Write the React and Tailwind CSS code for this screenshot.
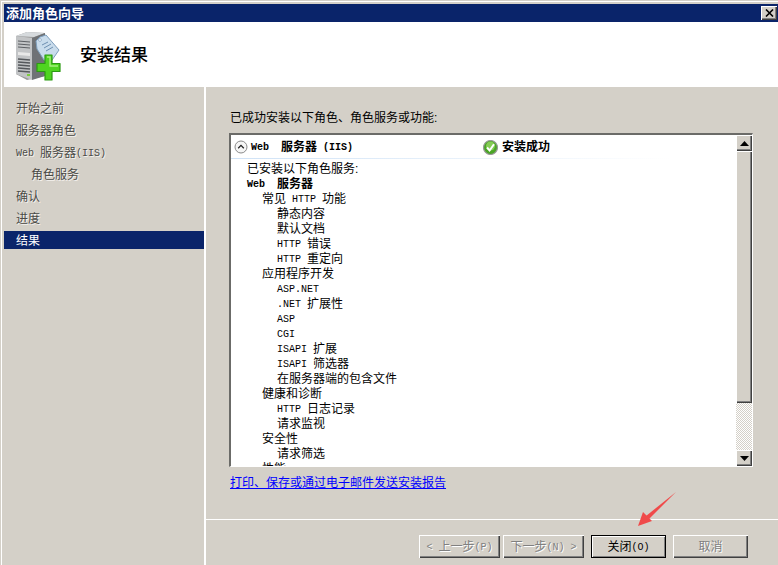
import React from 'react';

const Mono = ({ children }) => (
  <span className="font-['Liberation_Mono',monospace] text-[10px] whitespace-pre align-[1px]">{children}</span>
);

const steps = [
  { label: '开始之前' },
  { label: '服务器角色' },
  { label: <><Mono>Web </Mono>服务器<Mono>(IIS)</Mono></> },
  { label: '角色服务', sub: true },
  { label: '确认' },
  { label: '进度' },
  { label: '结果', active: true },
];

const treeRows = [
  { text: '已安装以下角色服务:', pad: 'pl-[16px]' },
  { text: <><Mono>Web  </Mono>服务器</>, pad: 'pl-[16px]', bold: true },
  { text: <>常见<Mono> HTTP </Mono>功能</>, pad: 'pl-[31px]' },
  { text: '静态内容', pad: 'pl-[46px]' },
  { text: '默认文档', pad: 'pl-[46px]' },
  { text: <><Mono>HTTP </Mono>错误</>, pad: 'pl-[46px]' },
  { text: <><Mono>HTTP </Mono>重定向</>, pad: 'pl-[46px]' },
  { text: '应用程序开发', pad: 'pl-[31px]' },
  { text: <Mono>ASP.NET</Mono>, pad: 'pl-[46px]' },
  { text: <><Mono>.NET </Mono>扩展性</>, pad: 'pl-[46px]' },
  { text: <Mono>ASP</Mono>, pad: 'pl-[46px]' },
  { text: <Mono>CGI</Mono>, pad: 'pl-[46px]' },
  { text: <><Mono>ISAPI </Mono>扩展</>, pad: 'pl-[46px]' },
  { text: <><Mono>ISAPI </Mono>筛选器</>, pad: 'pl-[46px]' },
  { text: '在服务器端的包含文件', pad: 'pl-[46px]' },
  { text: '健康和诊断', pad: 'pl-[31px]' },
  { text: <><Mono>HTTP </Mono>日志记录</>, pad: 'pl-[46px]' },
  { text: '请求监视', pad: 'pl-[46px]' },
  { text: '安全性', pad: 'pl-[31px]' },
  { text: '请求筛选', pad: 'pl-[46px]' },
  { text: '性能', pad: 'pl-[31px]' },
];

const bevel = 'shadow-[inset_1px_1px_0_#ffffff,inset_-1px_-1px_0_#404040,inset_-2px_-2px_0_#808080]';

const WizardButton = ({ children, width, disabled, primary }) => (
  <div
    className={`${width} h-[23px] flex items-center justify-center bg-[#d4d0c8] text-xs ${
      primary ? 'border border-black shadow-[inset_1px_1px_0_#ffffff,inset_-1px_-1px_0_#808080]' : bevel
    } ${disabled ? 'text-[#808080] [text-shadow:1px_1px_0_#ffffff]' : 'text-black'}`}
  >
    <span>{children}</span>
  </div>
);

const ServerIcon = () => (
  <svg width="48" height="52" viewBox="0 0 48 52">
    <path d="M1 6 L12 2 L30 3 L30 46 L12 50 L1 44 Z" fill="#9a9a9a" />
    <path d="M1 6 L12 2 L30 3 L19 7 Z" fill="#d6dadd" />
    <path d="M1 6 L17 8 L17 50 L1 44 Z" fill="#c2c4c6" />
    <path d="M17 8 L30 3 L30 46 L17 50 Z" fill="#6f7276" />
    <path d="M3 11 L15 12 M3 14 L15 15 M3 17 L15 18" stroke="#5c5f63" strokeWidth="1" />
    <path d="M3 22 L15 23 L15 26 L3 25 Z" fill="#e8e8e8" />
    <path d="M3 29 L15 30 M3 32 L15 33 M3 35 L15 36 M3 38 L15 39 M3 41 L15 42" stroke="#55585c" strokeWidth="1.4" />
    <rect x="12" y="44" width="3" height="2" fill="#7ccb3d" />
    <path d="M21 11 L25 7 L31 5 L44 20 L35 33 L29 30 L22 19 Z" fill="#c9dcec" stroke="#7f9fbd" strokeWidth="1" />
    <path d="M27 15 L33 12 M29 18 L36 14 M31 21 L38 17" stroke="#6d8fb0" strokeWidth="1" />
    <circle cx="25" cy="10" r="1.4" fill="#ffffff" stroke="#6d8fb0" strokeWidth="0.6" />
    <path
      d="M30 25 H37 V33.5 H45 V41.5 H37 V50 H30 V41.5 H22 V33.5 H30 Z"
      fill="#4fd421"
      stroke="#2b9a12"
      strokeWidth="1.2"
      strokeLinejoin="round"
    />
    <path d="M32 27 H35 V36 H43" fill="none" stroke="#a5f07e" strokeWidth="1.4" />
  </svg>
);

const ChevronCircle = () => (
  <svg width="14" height="14" viewBox="0 0 14 14">
    <circle cx="7" cy="7" r="6" fill="#f6f6f6" stroke="#8a8a8a" />
    <path d="M4.2 8.2 L7 5.4 L9.8 8.2" fill="none" stroke="#222222" strokeWidth="1.3" />
  </svg>
);

const CheckCircle = () => (
  <svg width="15" height="15" viewBox="0 0 15 15">
    <circle cx="7.5" cy="7.5" r="7" fill="#4aa526" stroke="#9a9a9a" strokeWidth="1.2" />
    <circle cx="7.5" cy="6" r="4.5" fill="#86cc55" />
    <path d="M4 7.5 L6.6 10.5 L11 4.2" fill="none" stroke="#ffffff" strokeWidth="2" />
  </svg>
);

const Arrow = ({ dir }) => (
  <svg width="9" height="5" viewBox="0 0 9 5">
    <path d={dir === 'up' ? 'M4.5 0 L9 5 L0 5 Z' : 'M0 0 L9 0 L4.5 5 Z'} fill="#000000" />
  </svg>
);

export default function App() {
  return (
    <div className="relative w-[778px] h-[565px] overflow-hidden flex flex-col bg-[#d4d0c8] text-xs text-black font-['Liberation_Sans','Noto_Sans_CJK_SC',sans-serif] pl-[4px] pt-[4px] shadow-[inset_1px_1px_0_#d4d0c8,inset_2px_2px_0_#ffffff]">
      {/* Title bar */}
      <div className="h-[18px] shrink-0 bg-[#0a246a] flex items-center justify-between pl-[2px] pr-[1px]">
        <span className="text-[13px] font-bold text-white leading-none">添加角色向导</span>
        <div className={`w-[16px] h-[14px] bg-[#d4d0c8] flex items-center justify-center ${bevel}`}>
          <svg width="9" height="8" viewBox="0 0 9 8">
            <path d="M1 0.5 L8 7.5 M8 0.5 L1 7.5" stroke="#000000" strokeWidth="1.6" />
          </svg>
        </div>
      </div>

      {/* Header */}
      <div className="h-[65px] shrink-0 bg-white flex items-center pl-[11px] pt-[2px] gap-[17px]">
        <ServerIcon />
        <span className="text-[17px] leading-none font-medium">安装结果</span>
      </div>

      <div className="flex-1 flex min-h-0">
        {/* Steps */}
        <div className="w-[200px] shrink-0 pt-[12px]">
          {steps.map((step, i) => (
            <div
              key={i}
              className={`h-[18px] mb-[4px] pt-[1px] flex items-center ${step.sub ? 'pl-[27px]' : 'pl-[12px]'} ${
                step.active ? 'bg-[#0a246a] text-white' : 'text-[#4a4a46] [text-shadow:1px_1px_0_#f4f2ee]'
              }`}
            >
              <span>{step.label}</span>
            </div>
          ))}
        </div>
        <div className="w-[2px] shrink-0 bg-white" />

        {/* Main */}
        <div className="flex-1 min-w-0 flex flex-col">
          <div className="h-[432px] shrink-0 pl-[24px] pt-[23px]">
            <div className="h-[16px] leading-[16px]">已成功安装以下角色、角色服务或功能:</div>

            <div className="mt-[7px] -ml-px w-[524px] h-[334px] flex border-t-2 border-l-2 border-t-[#6b6b68] border-l-[#6b6b68] border-r border-b border-r-white border-b-white bg-white">
              <div className="flex-1 min-w-0 overflow-hidden">
                <div className="h-[23px] pt-[1px] flex items-center pl-[3px]">
                  <ChevronCircle />
                  <span className="ml-[3px] font-bold w-[232px]">
                    <Mono>Web  </Mono>服务器<Mono> (IIS)</Mono>
                  </span>
                  <CheckCircle />
                  <span className="ml-[4px] font-bold">安装成功</span>
                </div>
                <div className="h-px w-[440px] bg-gradient-to-r from-[#cfe2f6] to-white" />
                <div className="pt-[3px]">
                  {treeRows.map((row, i) => (
                    <div key={i} className={`h-[15px] leading-[15px] ${row.pad} ${row.bold ? 'font-bold' : ''}`}>
                      {row.text}
                    </div>
                  ))}
                </div>
              </div>

              {/* Scrollbar */}
              <div className="w-[16px] shrink-0 flex flex-col">
                <div className={`h-[16px] shrink-0 bg-[#d4d0c8] flex items-center justify-center ${bevel}`}>
                  <Arrow dir="up" />
                </div>
                <div className={`h-[252px] shrink-0 bg-[#d4d0c8] ${bevel}`} />
                <div className="flex-1 bg-[repeating-conic-gradient(#d4d0c8_0_25%,#ffffff_0_50%)] bg-[length:2px_2px]" />
                <div className={`h-[16px] shrink-0 bg-[#d4d0c8] flex items-center justify-center ${bevel}`}>
                  <Arrow dir="down" />
                </div>
              </div>
            </div>

            <div className="mt-[8px] h-[16px] leading-[16px] text-[#0000ff] underline">
              打印、保存或通过电子邮件发送安装报告
            </div>
          </div>

          <div className="h-px shrink-0 bg-white" />

          {/* Buttons */}
          <div className="flex pl-[213px] pt-[15px]">
            <WizardButton width="w-[81px]" disabled>
              <Mono>{'< '}</Mono>上一步<Mono>(P)</Mono>
            </WizardButton>
            <div className="w-[3px]" />
            <WizardButton width="w-[81px]" disabled>
              下一步<Mono>{'(N) >'}</Mono>
            </WizardButton>
            <div className="w-[7px]" />
            <WizardButton width="w-[75px]" primary>
              关闭<Mono>(O)</Mono>
            </WizardButton>
            <div className="w-[7px]" />
            <WizardButton width="w-[75px]" disabled>
              取消
            </WizardButton>
          </div>
        </div>
      </div>

      {/* Annotation arrow over the dialog */}
      <svg className="absolute left-[632px] top-[488px]" width="50" height="42" viewBox="0 0 50 42">
        <path d="M44 4 L14 28 L17 31 Z" fill="#f04a4a" />
        <path d="M6 38 L11 24 L20 33 Z" fill="#f04a4a" />
      </svg>
    </div>
  );
}
